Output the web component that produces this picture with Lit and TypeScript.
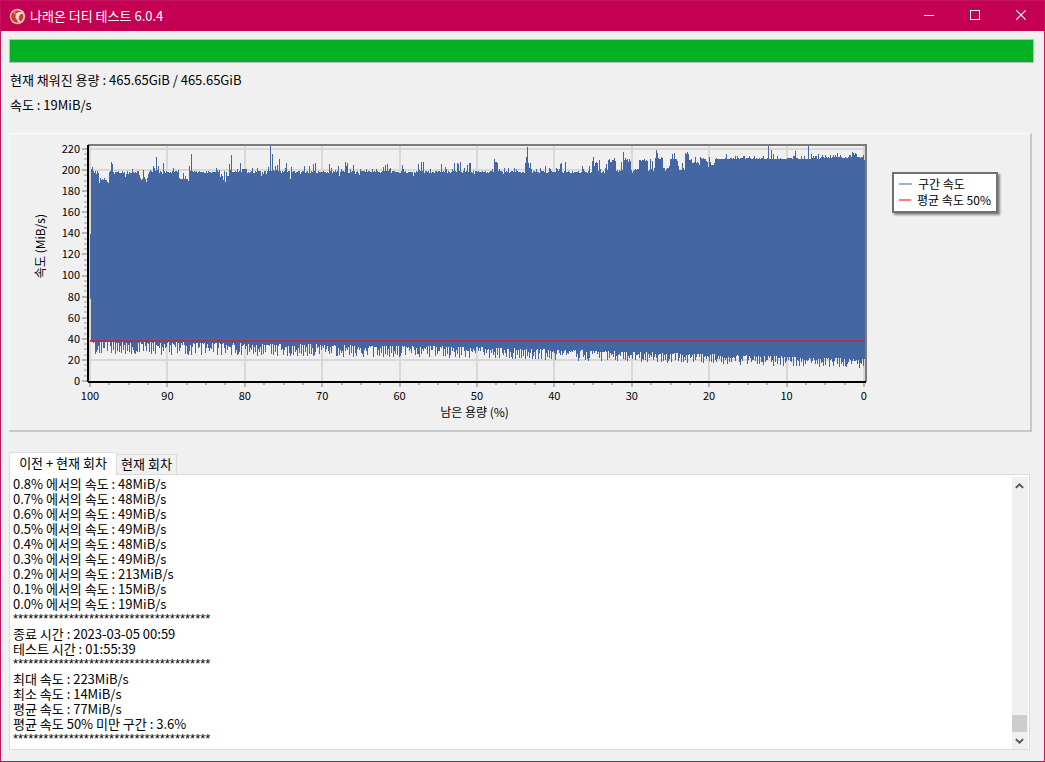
import { LitElement, html, svg, css } from "lit";
import { customElement, state } from "lit/decorators.js";

const FIRST = 91;
const LAST = 864;

// Runs of measured column tops: start column followed by consecutive values.
const TOP_RUNS: number[][] = [
  [91, 169, 167, 171, 173, 171, 174, 171, 173, 183, 178, 180, 179, 180, 178, 180, 180, 182, 183, 172, 171, 162, 164, 172, 174, 172],
  [125, 177, 174, 171, 174],
  [138, 171, 175, 178, 180, 179, 170, 177, 179, 182, 178, 174, 172, 170, 171, 172, 166, 168, 171, 157, 170, 166, 173, 171, 172, 174, 163, 171],
  [173, 168, 172, 171, 171, 172, 170, 178, 179, 179, 179, 173, 179, 176, 179, 179, 181, 166, 171, 154, 171],
  [216, 168, 170, 172, 170, 177, 174, 176, 180, 171, 182, 172, 176, 176, 164, 170, 155, 172],
  [237, 169, 172, 171, 163], [243, 169], [252, 168], [257, 168],
  [261, 176, 172, 174], [266, 174, 171, 167, 171, 146, 171, 154, 170, 171, 166, 170, 165, 171, 159, 171, 173],
  [285, 168, 163], [290, 179, 167], [300, 174], [304, 166], [309, 166], [313, 164, 171, 163],
  [329, 164, 171, 168], [335, 170], [338, 166, 176], [345, 162, 166, 163], [353, 165, 171, 174], [359, 175],
  [366, 169], [383, 167, 171, 165, 171, 164], [390, 168], [402, 165, 169], [413, 176, 172], [418, 164, 170, 171, 162, 171, 162],
  [430, 169], [441, 164], [445, 167], [454, 163], [457, 163, 164, 171, 162], [464, 168], [467, 165, 172, 163, 163],
  [474, 174], [494, 159, 162, 162, 163], [503, 174, 168], [508, 168], [514, 168],
  [524, 173, 163, 157, 147, 163, 168, 163, 169], [540, 168], [545, 166], [549, 168], [556, 168], [560, 164, 163], [565, 162],
  [582, 166], [589, 166], [592, 161, 157, 166, 163, 162, 163, 171, 160], [605, 168, 164, 170, 160, 159, 162, 162, 160, 160, 158, 161],
  [616, 171, 170, 172, 170, 171, 162, 170, 152, 160, 158, 160, 159, 162, 159, 161, 170, 173, 171, 170, 169, 170, 169, 169, 160, 160, 161, 160, 160, 159, 161, 160, 161, 171, 170, 159, 169],
  [652, 161, 171, 168, 158, 150, 153, 158, 159, 159, 157, 158, 168, 168, 171, 169, 168, 168, 166, 159, 159, 154, 159, 153, 159, 159, 161, 166, 170, 170, 170, 163, 168, 170, 153, 154, 152, 154, 160, 160],
  [691, 159, 163, 163, 162, 157, 163, 162, 163, 165, 157, 158, 159, 158, 159, 159, 161, 162, 167, 157, 162, 165, 165, 165, 163, 159],
  [726, 154], [768, 146], [771, 150], [773, 154], [795, 151], [808, 146], [811, 154], [818, 154],
  [837, 153], [852, 152, 153, 155, 153, 154, 157], [864, 160],
];

const noise = (n: number): number => {
  let h = Math.imul(n ^ 0x9e3779b9, 0x85ebca6b);
  h = Math.imul(h ^ (h >>> 13), 0xc2b2ae35);
  return ((h ^ (h >>> 16)) >>> 0) / 4294967296;
};

function columnTops(): number[] {
  const tops: number[] = [];
  for (let x = FIRST; x <= LAST; x++) {
    const r = noise(x);
    let base = 171;
    if (x > 820) base = 157;
    else if (x > 714) base = 158;
    const jitter = x > 714 ? (r < 0.2 ? -2 : r > 0.6 ? 1 : 0) : r < 0.08 ? -2 : r > 0.8 ? 2 : r > 0.4 ? 1 : 0;
    tops.push(base + jitter);
  }
  for (const [start, ...values] of TOP_RUNS) values.forEach((v, i) => (tops[start + i - FIRST] = v));
  return tops;
}

function columnBottoms(): number[] {
  const out: number[] = [];
  for (let x = FIRST; x <= LAST; x++) {
    const t = (x - FIRST) / (LAST - FIRST);
    const floor = t < 0.5 ? 352 + 8 * t : 356 + 20 * (t - 0.5);
    const swing = 11 - 4 * t;
    const r = Math.abs(Math.sin((x + 40) * (x + 7) * 1.37 + x * 0.73));
    const raised = x % 2 === 0 ? r > 0.15 : r > 0.8;
    const lift = raised ? swing * (0.35 + 0.65 * Math.abs(Math.sin(x * x * 0.91))) : 2 * Math.sin(x * 1.9);
    out.push(Math.round(Math.min(floor - lift, floor + 2)));
  }
  return out;
}

function areaPath(): string {
  const tops = columnTops();
  const bottoms = columnBottoms();
  return "M90 234h1v65h-1z" + tops.map((t, i) => `M${FIRST + i} ${t}h1V${bottoms[i]}h-1z`).join("");
}

const AREA = areaPath();
const H_LINES = Array.from({ length: 12 }, (_, i) => Math.round(380 - i * 21.1));
const V_LINES = Array.from({ length: 11 }, (_, i) => Math.round(89 + i * 77.4));
const Y_MINOR = Array.from({ length: 45 }, (_, i) => Math.round(380 - i * 5.275));
const X_MINOR = Array.from({ length: 41 }, (_, i) => Math.round(89 + i * 19.35));

@customElement("speed-chart")
export class SpeedChart extends LitElement {
  static styles = css`
    :host {
      display: block;
      border: 1px solid #fafafa;
      border-right: 2px solid #c8c8c8;
      border-bottom: 2px solid #c8c8c8;
      font-size: 12px;
      line-height: 16px;
    }
    .chart {
      display: grid;
      grid-template-columns: 16px 34px minmax(0, 1fr) auto;
      grid-template-rows: 244px 16px 16px;
      padding: 10px 32px 10px 22px;
    }
    .y-title {
      justify-self: center;
      align-self: center;
      writing-mode: vertical-rl;
      text-orientation: sideways;
      transform: rotate(180deg);
      white-space: nowrap;
      margin-top: -40px;
    }
    .y-labels {
      display: flex;
      flex-direction: column;
      justify-content: space-between;
      text-align: right;
      padding-right: 2px;
      margin: -4px 0 0;
      font-size: 11px;
    }
    .plot {
      display: block;
      width: 100%;
      height: 244px;
    }
    .x-labels {
      grid-column: 3;
      display: flex;
      justify-content: space-between;
      margin: -1px -9px 0 -4px;
      font-size: 11px;
    }
    .x-labels span {
      width: 24px;
      text-align: center;
    }
    .x-title {
      grid-column: 3;
      text-align: center;
    }
    .legend {
      grid-column: 4;
      grid-row: 1;
      align-self: start;
      box-sizing: border-box;
      width: 106px;
      margin: 28px 0 0 25px;
      padding: 2px 5px 3px;
      list-style: none;
      background: #fff;
      border: 2px solid #707070;
      box-shadow: 2px 2px 2px rgba(0, 0, 0, 0.45);
      white-space: nowrap;
    }
    .legend li {
      display: flex;
      align-items: center;
      gap: 6px;
    }
    .key {
      width: 13px;
      height: 2px;
      background: #9fb0d4;
    }
    .key.avg {
      background: #ff7a7a;
    }
  `;

  render() {
    return html`
      <div class="chart">
        <div class="y-title">속도 (MiB/s)</div>
        <div class="y-labels">
          ${Array.from({ length: 12 }, (_, i) => html`<span>${220 - i * 20}</span>`)}
        </div>
        <svg class="plot" viewBox="82 144 785 244" preserveAspectRatio="none" shape-rendering="crispEdges" role="img" aria-label="구간 속도">
          ${H_LINES.slice(1).map((y) => svg`<rect x="90" y=${y} width="775" height="2" fill="#d8d8d8"/>`)}
          ${V_LINES.map((x) => svg`<rect x=${x} y="146" width="2" height="235" fill="#d8d8d8"/>`)}
          ${Y_MINOR.map((y) => svg`<rect x="84" y=${y} width="3" height="2" fill="#c4c4c4"/>`)}
          ${H_LINES.map((y) => svg`<rect x="82" y=${y} width="5" height="2" fill="#b4b4b4"/>`)}
          ${X_MINOR.map((x) => svg`<rect x=${x} y="383" width="2" height="2" fill="#b4b4b4"/>`)}
          ${V_LINES.map((x) => svg`<rect x=${x} y="383" width="2" height="4" fill="#b4b4b4"/>`)}
          <path d=${AREA} fill="#4466a3" />
          <rect x="90" y="340" width="775" height="2" fill="#a83350" />
          <rect x="88" y="144" width="779" height="2" fill="#7b7b7b" />
          <rect x="865" y="144" width="2" height="238" fill="#7b7b7b" />
          <rect x="87" y="145" width="2" height="237" fill="#000" />
          <rect x="88" y="381" width="778" height="2" fill="#000" />
        </svg>
        <ul class="legend">
          <li><span class="key"></span>구간 속도</li>
          <li><span class="key avg"></span>평균 속도 50%</li>
        </ul>
        <div class="x-labels">
          ${Array.from({ length: 11 }, (_, i) => html`<span>${100 - i * 10}</span>`)}
        </div>
        <div class="x-title">남은 용량 (%)</div>
      </div>
    `;
  }
}

const STARS = "*".repeat(39);
const LOG = [
  "0.8% 에서의 속도 : 48MiB/s",
  "0.7% 에서의 속도 : 48MiB/s",
  "0.6% 에서의 속도 : 49MiB/s",
  "0.5% 에서의 속도 : 49MiB/s",
  "0.4% 에서의 속도 : 48MiB/s",
  "0.3% 에서의 속도 : 49MiB/s",
  "0.2% 에서의 속도 : 213MiB/s",
  "0.1% 에서의 속도 : 15MiB/s",
  "0.0% 에서의 속도 : 19MiB/s",
  STARS,
  "종료 시간 : 2023-03-05 00:59",
  "테스트 시간 : 01:55:39",
  STARS,
  "최대 속도 : 223MiB/s",
  "최소 속도 : 14MiB/s",
  "평균 속도 : 77MiB/s",
  "평균 속도 50% 미만 구간 : 3.6%",
  STARS,
];

@customElement("app-root")
export class AppRoot extends LitElement {
  @state() private tab = 0;

  static styles = css`
    :host {
      display: flex;
      flex-direction: column;
      box-sizing: border-box;
      min-height: 100vh;
      border: 1px solid #c3125c;
      background: #f0f0f0;
      color: #000;
      font-family: "Noto Sans CJK KR", "Noto Sans", sans-serif;
      font-size: 13px;
      line-height: 15px;
    }
    button {
      font: inherit;
      color: inherit;
      margin: 0;
      padding: 0;
      border: 0;
      background: none;
    }
    .titlebar {
      display: flex;
      align-items: center;
      height: 30px;
      padding-left: 8px;
      background: #c30052;
      color: #fff;
    }
    .logo {
      width: 17px;
      height: 17px;
      margin-right: 4px;
    }
    .title {
      flex: 1;
      margin: 0;
      padding-bottom: 2px;
      font-size: 13px;
      font-weight: 400;
    }
    .win {
      display: grid;
      place-items: center;
      width: 46px;
      height: 30px;
      padding-bottom: 2px;
    }
    .content {
      flex: 1;
      display: flex;
      flex-direction: column;
      padding: 8px 10px 11px 8px;
    }
    progress {
      appearance: none;
      display: block;
      box-sizing: border-box;
      width: 100%;
      height: 24px;
      border: 1px solid #bcbcbc;
      background: #e6e6e6;
    }
    progress::-webkit-progress-bar {
      background: #e6e6e6;
    }
    progress::-webkit-progress-value {
      background: #06b025;
    }
    .statuses {
      display: grid;
      gap: 10px;
      padding: 9px 0 21px 1px;
    }
    .status {
      margin: 0;
    }
    speed-chart {
      margin-right: 2px;
    }
    .tabs {
      display: flex;
      align-items: flex-end;
      margin-top: 20px;
    }
    .tab {
      box-sizing: border-box;
      min-width: 60px;
      height: 20px;
      padding: 0 3px 2px;
      border: 1px solid #dcdcdc;
      border-width: 1px 1px 0 0;
      white-space: nowrap;
    }
    .tab.active {
      min-width: 108px;
      height: 23px;
      margin-bottom: -1px;
      padding: 0 7px 4px;
      border-left-width: 1px;
      background: #fff;
      z-index: 1;
    }
    .log {
      flex: 1;
      display: flex;
      margin-right: 4px;
      border: 1px solid #dcdcdc;
      background: #fff;
    }
    .lines {
      flex: 1;
      padding: 1px 3px 3px;
    }
    .lines p {
      margin: 0;
      height: 15px;
      white-space: nowrap;
    }
    .lines .stars {
      font-family: "Liberation Sans", sans-serif;
    }
    .scroll {
      display: flex;
      flex-direction: column;
      width: 16px;
      margin: 2px 1px 0 0;
      background: #f0f0f0;
    }
    .arrow {
      display: grid;
      place-items: center;
      width: 15px;
      height: 17px;
    }
    .track {
      flex: 1;
      display: flex;
      flex-direction: column;
      justify-content: flex-end;
    }
    .thumb {
      width: 15px;
      height: 17px;
      background: #cdcdcd;
    }
  `;

  private tabButton(index: number, label: string) {
    const active = this.tab === index;
    return html`<button
      class=${active ? "tab active" : "tab"}
      role="tab"
      aria-selected=${active ? "true" : "false"}
      @click=${() => (this.tab = index)}
    >${label}</button>`;
  }

  render() {
    return html`
      <header class="titlebar">
        <svg class="logo" viewBox="0 0 17 17" aria-hidden="true">
          <circle cx="8.5" cy="8.5" r="8" fill="#9a6f68" />
          <circle cx="8.5" cy="8.5" r="7.3" fill="#f3e9e2" />
          <circle cx="8.2" cy="8.5" r="6.2" fill="#d5382e" />
          <path d="M7.6 5.2C9.6 3.4 12.4 3.6 14 5.6L11.6 6.2L9.8 8.2L10.4 10L9.2 10.4L11.4 13.4C10 14.2 9 14 8.6 13.6C8.8 12.4 7.8 11.4 7 10.4C6.2 9.4 6.4 7.8 7.6 6.8L5.8 7.4Z" fill="#f8e2dc" />
          <path d="M4 5.4C5 4 6.4 3.4 7.4 3.4L5.6 6Z" fill="#ee8c80" />
        </svg>
        <h1 class="title">나래온 더티 테스트 6.0.4</h1>
        <button class="win" aria-label="최소화">
          <svg width="10" height="10" shape-rendering="crispEdges"><rect y="5" width="10" height="1" fill="#fff" /></svg>
        </button>
        <button class="win" aria-label="최대화">
          <svg width="10" height="10" shape-rendering="crispEdges"><path d="M.5.5h9v9h-9z" fill="none" stroke="#fff" /></svg>
        </button>
        <button class="win" aria-label="닫기">
          <svg width="10" height="10"><path d="M.2.2l9.6 9.6M9.8.2L.2 9.8" stroke="#fff" stroke-width="1.1" /></svg>
        </button>
      </header>
      <main class="content">
        <progress max="100" value="100" aria-label="진행률"></progress>
        <div class="statuses">
          <p class="status">현재 채워진 용량 : 465.65GiB / 465.65GiB</p>
          <p class="status">속도 : 19MiB/s</p>
        </div>
        <speed-chart></speed-chart>
        <div class="tabs" role="tablist">
          ${this.tabButton(0, "이전 + 현재 회차")}${this.tabButton(1, "현재 회차")}
        </div>
        <section class="log" role="tabpanel">
          <div class="lines">
            ${LOG.map((line) => html`<p class=${line === STARS ? "stars" : ""}>${line}</p>`)}
          </div>
          <div class="scroll">
            <button class="arrow" aria-label="위로">
              <svg width="9" height="6"><path d="M.9 4.9L4.5 1.4L8.1 4.9" fill="none" stroke="#555" stroke-width="2" /></svg>
            </button>
            <div class="track"><div class="thumb"></div></div>
            <button class="arrow" aria-label="아래로">
              <svg width="9" height="6"><path d="M.9 1.1L4.5 4.6L8.1 1.1" fill="none" stroke="#555" stroke-width="2" /></svg>
            </button>
          </div>
        </section>
      </main>
    `;
  }
}
